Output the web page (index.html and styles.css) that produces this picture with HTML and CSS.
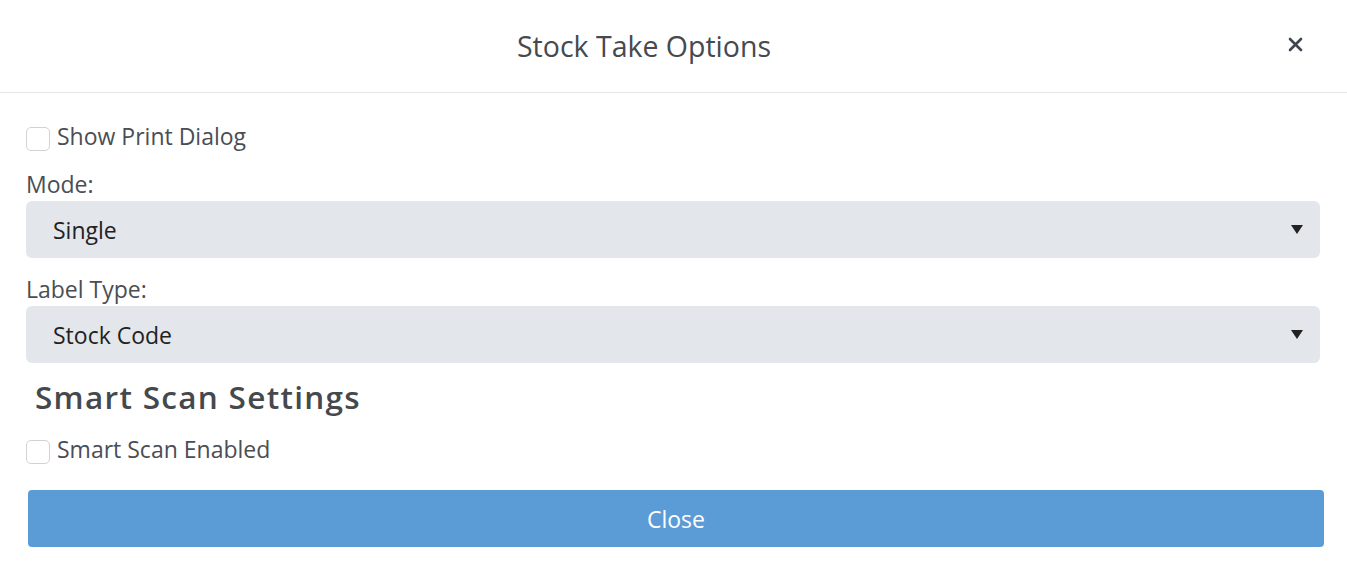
FILE: index.html
```html
<!DOCTYPE html>
<html>
<head>
<meta charset="utf-8">
<link rel="stylesheet" href="styles.css">
</head>
<body>
<div class="modal">
  <div class="modal-header">
    <h1 class="title">Stock Take Options</h1>
    <span class="close-x">
      <svg width="15" height="15" viewBox="0 0 15 15"><path d="M2 2L13 13M13 2L2 13" stroke="#3f4650" stroke-width="2.6" stroke-linecap="round"/></svg>
    </span>
  </div>
  <div class="modal-body">
    <label class="check-row"><span class="box"></span><span>Show Print Dialog</span></label>
    <div class="field first">
      <div class="field-label">Mode:</div>
      <div class="select"><span>Single</span><span class="caret"></span></div>
    </div>
    <div class="field">
      <div class="field-label">Label Type:</div>
      <div class="select"><span>Stock Code</span><span class="caret"></span></div>
    </div>
    <h2 class="section">Smart Scan Settings</h2>
    <label class="check-row"><span class="box"></span><span>Smart Scan Enabled</span></label>
    <div class="btn">Close</div>
  </div>
</div>
</body>
</html>
```
FILE: styles.css
```css
* { box-sizing: border-box; }
html, body { margin: 0; padding: 0; background: #fff; }
body { font-family: "Open Sans", "Noto Sans", sans-serif; color: #4a4e54; }
.modal { width: 1347px; }
.modal-header {
  height: 93px;
  border-bottom: 1px solid #e6e6e6;
  display: flex;
  align-items: flex-start;
  padding: 26px 44px 0 0;
}
.title {
  flex: 1;
  text-align: center;
  margin: 0;
  font-weight: 400;
  font-size: 28.5px;
  line-height: 40px;
  color: #454a50;
}
.close-x {
  width: 15px;
  height: 15px;
  margin-top: 11px;
  display: flex;
}
.modal-body { padding: 30px 27px 0 26px; display: flex; flex-direction: column; }
.check-row {
  display: flex;
  align-items: flex-start;
  gap: 7px;
  font-size: 23px;
  line-height: 26px;
  height: 26px;
  color: #4a4e54;
}
.box {
  width: 24px; height: 24px;
  margin-top: 4px;
  border: 1px solid #cfd2d6;
  border-radius: 5px;
  background: #fff;
  flex: none;
}
.field { margin-top: 18px; }
.field.first { margin-top: 22px; }
.field-label { font-size: 23px; line-height: 26px; color: #4a4e54; margin-bottom: 4px; }
.select {
  height: 57px;
  background: #e3e6eb;
  border-radius: 6px;
  display: flex;
  align-items: center;
  justify-content: space-between;
  padding: 0 17px 0 27px;
  font-size: 23px;
  color: #222;
}
.caret {
  width: 0; height: 0;
  border-left: 6px solid transparent;
  border-right: 6px solid transparent;
  border-top: 9px solid #222;
}
.section {
  margin: 14px 0 0 9px;
  font-size: 31.5px;
  font-weight: 600;
  letter-spacing: 1.3px;
  color: #45494e;
  line-height: 40px;
}
.section + .check-row { margin-top: 19px; }
.btn {
  margin: 28px -4px 0 2px;
  height: 57px;
  background: #5b9bd6;
  border-radius: 4px;
  color: #fff;
  font-size: 23px;
  display: flex;
  align-items: center;
  justify-content: center;
}
```
